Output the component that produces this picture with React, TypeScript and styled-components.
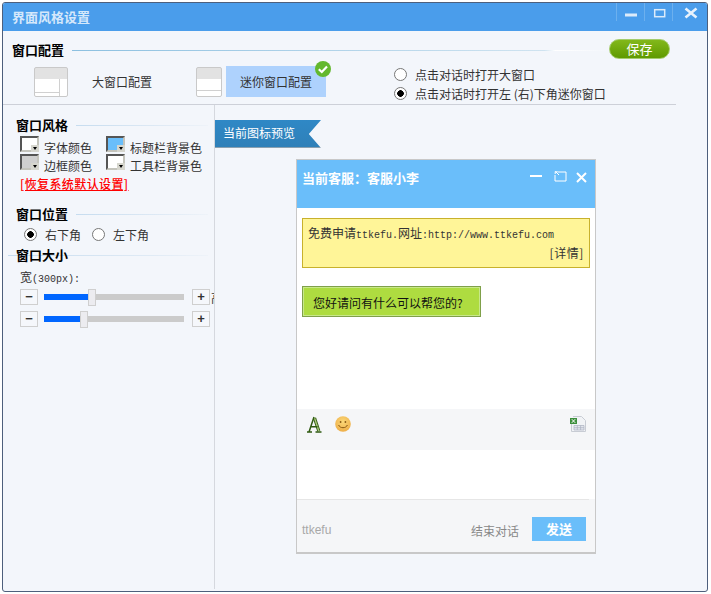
import * as React from 'react';
import styled, { createGlobalStyle } from 'styled-components';

const CJK = `"Noto Sans CJK SC", "Liberation Sans", sans-serif`;

const GlobalStyle = createGlobalStyle`
  html, body {
    margin: 0;
    padding: 0;
    background: #fff;
  }
  #root {
    width: 711px;
    height: 594px;
  }
  * {
    box-sizing: border-box;
  }
`;

export default function App() {
  return (
    <>
      <GlobalStyle />
      <Window>
        <TitleBar>
          <WindowTitle>界面风格设置</WindowTitle>
          <WindowControls>
            <ControlButton>
              <svg width="27" height="18" viewBox="0 0 27 18">
                <rect x="8" y="10.5" width="12" height="3" fill="#dcebfa" />
              </svg>
            </ControlButton>
            <ControlButton>
              <svg width="27" height="18" viewBox="0 0 27 18">
                <rect x="9.7" y="6.7" width="10" height="7" fill="none" stroke="#dcebfa" strokeWidth="1.5" />
              </svg>
            </ControlButton>
            <ControlButton $wide>
              <svg width="33" height="18" viewBox="0 0 33 18">
                <path d="M12.5 5.5 L23.5 14.5 M23.5 5.5 L12.5 14.5" stroke="#e8f2fc" strokeWidth="2.6" fill="none" />
              </svg>
            </ControlButton>
          </WindowControls>
        </TitleBar>

        <TopSection>
          <HeadingRow>
            <Heading>窗口配置</Heading>
            <FadeLine />
            <SaveButton>保存</SaveButton>
          </HeadingRow>
          <ConfigRow>
            <LayoutThumb $variant="large" />
            <ConfigLabel>大窗口配置</ConfigLabel>
            <LayoutThumb $variant="mini" />
            <SelectedConfig>
              迷你窗口配置
              <CheckBadge>
                <svg width="16" height="16" viewBox="0 0 16 16">
                  <circle cx="8" cy="8" r="8" fill="#63b82e" />
                  <path d="M3.8 8.2 L6.8 11 L12 5.6" fill="none" stroke="#fff" strokeWidth="2.2" />
                </svg>
              </CheckBadge>
            </SelectedConfig>
            <OpenModes>
              <RadioRow>
                <Radio />
                <span>点击对话时打开大窗口</span>
              </RadioRow>
              <RadioRow>
                <Radio $checked />
                <span>点击对话时打开左 (右)下角迷你窗口</span>
              </RadioRow>
            </OpenModes>
          </ConfigRow>
        </TopSection>

        <Body>
          <SidePanel>
            <SideHeading>
              <Heading>窗口风格</Heading>
              <SideLine />
            </SideHeading>
            <ColorGrid>
              <ColorOption>
                <Swatch $color="#fff" />
                <ColorName>字体颜色</ColorName>
              </ColorOption>
              <ColorOption>
                <Swatch $color="#6abefa" />
                <ColorName>标题栏背景色</ColorName>
              </ColorOption>
              <ColorOption>
                <Swatch $color="#cfcfcf" />
                <ColorName>边框颜色</ColorName>
              </ColorOption>
              <ColorOption>
                <Swatch $color="#fff" />
                <ColorName>工具栏背景色</ColorName>
              </ColorOption>
            </ColorGrid>
            <ResetLink>[恢复系统默认设置]</ResetLink>

            <PositionHeading>
              <Heading>窗口位置</Heading>
              <SideLine />
            </PositionHeading>
            <PositionRow>
              <Radio $checked />
              <span>右下角</span>
              <Radio />
              <span>左下角</span>
            </PositionRow>

            <SizeHeading>
              <Heading>窗口大小</Heading>
            </SizeHeading>
            <SizeLabel>
              宽<Mono>(300px):</Mono>
            </SizeLabel>
            <SliderRow>
              <StepButton>−</StepButton>
              <Track>
                <TrackFill style={{ width: 44 }} />
                <Thumb />
              </Track>
              <StepButton>+</StepButton>
              <ClippedLabel>高</ClippedLabel>
            </SliderRow>
            <SliderRow>
              <StepButton>−</StepButton>
              <Track>
                <TrackFill style={{ width: 36 }} />
                <Thumb />
              </Track>
              <StepButton>+</StepButton>
            </SliderRow>
          </SidePanel>

          <PreviewPanel>
            <Ribbon>当前图标预览</Ribbon>
            <ChatWindow>
              <ChatHeader>
                <ChatTitle>当前客服：客服小李</ChatTitle>
                <ChatControls>
                  <MinimizeIcon width="12" height="2" viewBox="0 0 12 2">
                    <rect width="12" height="2" fill="#fff" />
                  </MinimizeIcon>
                  <RestoreIcon width="13" height="11" viewBox="0 0 13 11">
                    <path d="M4 1 H12 V10 H1 V4 M1.5 0.5 L5 4 M1.2 0.5 V3 M1.2 0.8 H3.8" fill="none" stroke="#fff" strokeWidth="1" />
                  </RestoreIcon>
                  <svg width="11" height="11" viewBox="0 0 11 11">
                    <path d="M1 1 L10 10 M10 1 L1 10" fill="none" stroke="#fff" strokeWidth="2" />
                  </svg>
                </ChatControls>
              </ChatHeader>
              <Messages>
                <Notice>
                  <NoticeText>
                    免费申请<Mono>ttkefu.</Mono>网址<Mono>:http://www.ttkefu.com</Mono>
                  </NoticeText>
                  <NoticeMore>[详情]</NoticeMore>
                </Notice>
                <Bubble>您好请问有什么可以帮您的?</Bubble>
              </Messages>
              <ChatToolbar>
                <svg width="16" height="17" viewBox="0 0 16 17">
                  <path d="M8.5 2 L12.8 15" fill="none" stroke="#2f5a10" strokeWidth="3.2" />
                  <path d="M8.5 2 L12.8 15" fill="none" stroke="#a8c878" strokeWidth="1.4" />
                  <path d="M1 16 H6 M9.5 16 H15.5 M3 16 L8 1 M5 10.8 H11.5" fill="none" stroke="#2f5a10" strokeWidth="1.5" />
                </svg>
                <svg width="16" height="16" viewBox="0 0 16 16">
                  <defs>
                    <radialGradient id="smile" cx="50%" cy="35%" r="65%">
                      <stop offset="0%" stopColor="#fbd878" />
                      <stop offset="100%" stopColor="#eeae48" />
                    </radialGradient>
                  </defs>
                  <circle cx="8" cy="8" r="7.8" fill="url(#smile)" />
                  <circle cx="5.6" cy="6" r="0.9" fill="#8a5a14" />
                  <circle cx="10.4" cy="6" r="0.9" fill="#8a5a14" />
                  <path d="M3.6 9 C5 12.6 11 12.6 12.4 9" fill="none" stroke="#8a5a14" strokeWidth="1" />
                </svg>
                <ExcelIcon width="16" height="16" viewBox="0 0 16 16">
                  <path d="M3 0.5 H11.5 L15.5 4.5 V15.5 H1.5 V7" fill="#f1f3f6" stroke="#c8ccd4" />
                  <path d="M4 9.5 H14 V14 H4 Z M7.3 9.5 V14 M10.6 9.5 V14 M4 11.7 H14" fill="#e4e7ee" stroke="#aab0c0" strokeWidth="0.7" />
                  <rect x="0" y="2" width="7" height="6" fill="#3d8f3d" />
                  <path d="M1.8 3.2 L5.2 6.8 M5.2 3.2 L1.8 6.8" stroke="#fff" strokeWidth="1" />
                </ExcelIcon>
              </ChatToolbar>
              <ChatInput />
              <ChatFooter>
                <Brand>ttkefu</Brand>
                <EndLink>结束对话</EndLink>
                <SendButton>发送</SendButton>
              </ChatFooter>
            </ChatWindow>
          </PreviewPanel>
        </Body>
      </Window>
    </>
  );
}

const Window = styled.div`
  width: 706px;
  height: 590px;
  margin: 2px 0 0 2px;
  border: 1px solid #4d5f7c;
  border-radius: 3px;
  background: #f3f6fb;
  display: flex;
  flex-direction: column;
  overflow: hidden;
  font-family: ${CJK};
  font-size: 12px;
  color: #333;
`;

const TitleBar = styled.div`
  height: 28px;
  flex: none;
  background: #4a9deb;
  display: flex;
  justify-content: space-between;
  padding-left: 9px;
`;

const WindowTitle = styled.div`
  font-size: 13px;
  font-weight: 700;
  line-height: 27px;
  color: #d5e8fb;
`;

const WindowControls = styled.div`
  display: flex;
  align-items: flex-start;
  height: 18px;
  margin-right: 1px;
`;

const ControlButton = styled.div<{ $wide?: boolean }>`
  width: ${({ $wide }) => ($wide ? 34 : 28)}px;
  height: 18px;
  line-height: 0;
  border-left: 1px solid #6cb0ee;
`;

const TopSection = styled.div`
  height: 74px;
  flex: none;
  margin-right: 31px;
  border-bottom: 1px solid #cdd0d8;
  padding: 9px 0 0 9px;
  display: flex;
  flex-direction: column;
`;

const HeadingRow = styled.div`
  display: flex;
  align-items: center;
  height: 20px;
`;

const Heading = styled.div`
  font-size: 13px;
  font-weight: 700;
  line-height: 16px;
  color: #000;
  flex: none;
`;

const FadeLine = styled.div`
  flex: 1;
  height: 1px;
  margin: 1px 0 0 8px;
  background: linear-gradient(to right, #8cc0e0, #cfe3f0 88%, #fff 90%, #f3f6fb);
`;

const SaveButton = styled.div`
  width: 61px;
  height: 20px;
  margin: -2px 6px 0 0;
  flex: none;
  border-radius: 10px;
  background: linear-gradient(#82b81a, #5f9a00);
  border: 1px solid #a4cc6c;
  color: #fff;
  font-size: 13px;
  line-height: 17px;
  text-align: center;
`;

const ConfigRow = styled.div`
  display: flex;
  align-items: flex-start;
  margin-top: 6px;
  padding-left: 22px;
`;

const LayoutThumb = styled.div<{ $variant: 'large' | 'mini' }>`
  width: ${({ $variant }) => ($variant === 'large' ? 34 : 26)}px;
  height: 30px;
  margin-top: 1px;
  flex: none;
  border: 1px solid #c9c9c9;
  border-radius: 2px;
  background:
    ${({ $variant }) =>
      $variant === 'large'
        ? `linear-gradient(#d0d0d0, #d0d0d0) 24px 11px / 1px 100% no-repeat,
           linear-gradient(#d0d0d0, #d0d0d0) 0 24px / 24px 1px no-repeat,`
        : `linear-gradient(#d0d0d0, #d0d0d0) 0 22px / 100% 1px no-repeat,`}
    linear-gradient(#e2e2e2, #e2e2e2) 0 0 / 100% 11px no-repeat,
    #fff;
`;

const ConfigLabel = styled.div`
  width: 128px;
  padding-left: 24px;
  line-height: 32px;
  flex: none;
`;

const SelectedConfig = styled.div`
  position: relative;
  width: 100px;
  height: 31px;
  margin-left: 4px;
  flex: none;
  background: #aed2fd;
  text-align: center;
  line-height: 31px;
`;

const CheckBadge = styled.div`
  position: absolute;
  top: -5px;
  right: -5px;
  width: 16px;
  height: 16px;
  line-height: 0;
`;

const OpenModes = styled.div`
  margin: -1px 0 0 68px;
  display: flex;
  flex-direction: column;
`;

const RadioRow = styled.div`
  display: flex;
  align-items: center;
  gap: 8px;
  height: 19px;
  white-space: nowrap;
`;

const Radio = styled.span<{ $checked?: boolean }>`
  width: 13px;
  height: 13px;
  flex: none;
  display: inline-block;
  border-radius: 50%;
  border: 1px solid #777;
  background: ${({ $checked }) =>
    $checked ? 'radial-gradient(circle, #000 0 3px, #fff 3.6px)' : '#fff'};
`;

const Body = styled.div`
  flex: 1;
  min-height: 0;
  display: flex;
`;

const SidePanel = styled.div`
  width: 212px;
  height: 484px;
  flex: none;
  overflow: hidden;
  border-right: 1px solid #d5d8de;
  padding: 12px 0 0 13px;
`;

const SideHeading = styled.div`
  display: flex;
  align-items: center;
  height: 16px;
`;

const SideLine = styled.div`
  width: 132px;
  height: 1px;
  margin-left: 8px;
  background: linear-gradient(to right, #c6dcef, #dfeaf5 65%, #eef3f9);
`;

const ColorGrid = styled.div`
  display: grid;
  grid-template-columns: 86px auto;
  grid-auto-rows: 18px;
  margin: 3px 0 0 4px;
`;

const ColorOption = styled.div`
  display: flex;
  align-items: flex-start;
  gap: 5px;
  white-space: nowrap;
`;

const ColorName = styled.span`
  margin-top: 3px;
  line-height: 18px;
`;

const Swatch = styled.span<{ $color: string }>`
  position: relative;
  width: 19px;
  height: 16px;
  flex: none;
  background: ${({ $color }) => $color};
  border: 2px solid;
  border-color: #555 #c4c4bc #c4c4bc #555;
  &::before {
    content: '';
    position: absolute;
    right: -2px;
    bottom: -2px;
    width: 8px;
    height: 7px;
    background: #d6d6ce;
  }
  &::after {
    content: '';
    position: absolute;
    right: 0;
    bottom: 0;
    border: 2.5px solid transparent;
    border-top: 3px solid #000;
    border-bottom: 0;
  }
`;

const ResetLink = styled.div`
  margin: 4px 0 0 4px;
  color: #f00;
  font-size: 12px;
  line-height: 16px;
  text-decoration: underline;
  letter-spacing: 0.4px;
  font-weight: 500;
`;

const PositionHeading = styled(SideHeading)`
  margin-top: 14px;
`;

const PositionRow = styled.div`
  display: flex;
  align-items: center;
  height: 18px;
  margin: 3px 0 0 8px;
  span:nth-child(2) {
    margin: 0 11px 0 8px;
  }
  span:nth-child(4) {
    margin-left: 8px;
  }
`;

const SizeHeading = styled.div`
  height: 16px;
  margin: 4px 0 0 -8px;
  padding-left: 8px;
  background: linear-gradient(to right, #c6dcef, #dfeaf5 70%, #eef3f9) 0 8px / 200px 1px no-repeat;
`;

const SizeLabel = styled.div`
  margin: 6px 0 0 4px;
  line-height: 16px;
  white-space: nowrap;
`;

const SliderRow = styled.div`
  display: flex;
  align-items: center;
  height: 16px;
  margin: 1px 0 6px 4px;
  width: 210px;
`;

const StepButton = styled.div`
  width: 18px;
  height: 16px;
  flex: none;
  border: 1px solid #cfcfcf;
  background: #f5f7fb;
  color: #333;
  font: 700 13px/13px "Liberation Sans", sans-serif;
  text-align: center;
`;

const Track = styled.div`
  width: 140px;
  height: 6px;
  margin: 0 8px 0 6px;
  flex: none;
  display: flex;
  align-items: center;
  background: #cbcbcb;
`;

const TrackFill = styled.div`
  height: 6px;
  flex: none;
  background: #0066ff;
`;

const Thumb = styled.div`
  width: 8px;
  height: 17px;
  flex: none;
  background: #ececf0;
  border: 1px solid #cfcfcf;
`;

const ClippedLabel = styled.span`
  margin-left: 1px;
  flex: none;
`;

const PreviewPanel = styled.div`
  flex: 1;
  min-width: 0;
  padding-top: 15px;
`;

const Ribbon = styled.div`
  width: 106px;
  height: 28px;
  background: linear-gradient(#2f88c6, #2f80b8);
  border-bottom: 1px solid #8aa0b0;
  clip-path: polygon(0 0, 100% 0, 88.5% 50%, 100% 100%, 0 100%);
  color: #fff;
  line-height: 26px;
  padding-left: 8px;
`;

const ChatWindow = styled.div`
  width: 300px;
  height: 395px;
  margin: 11px 0 0 81px;
  background: #fff;
  border: 1px solid #c8c8c8;
  border-bottom-width: 2px;
  display: flex;
  flex-direction: column;
`;

const ChatHeader = styled.div`
  height: 48px;
  flex: none;
  background: #6abefa;
  display: flex;
  justify-content: space-between;
  padding: 9px 8px 0 5px;
`;

const ChatTitle = styled.div`
  font-size: 13px;
  font-weight: 700;
  line-height: 17px;
  color: #fff;
`;

const ChatControls = styled.div`
  display: flex;
  align-items: flex-start;
  padding-top: 3px;
`;

const MinimizeIcon = styled.svg`
  margin-top: 3px;
`;

const RestoreIcon = styled.svg`
  margin: -1px 9px 0 12px;
`;

const Messages = styled.div`
  flex: 1;
  padding: 10px 5px 0;
`;

const Notice = styled.div`
  height: 50px;
  background: #fff598;
  border: 1px solid #c8b12c;
  padding: 4px 5px;
  line-height: 20px;
`;

const NoticeText = styled.div`
  white-space: nowrap;
`;

const Mono = styled.span`
  font-family: "Liberation Mono", monospace;
  font-size: 10px;
`;

const NoticeMore = styled.div`
  text-align: right;
  margin-top: -3px;
  letter-spacing: 0.6px;
`;

const Bubble = styled.div`
  width: 179px;
  height: 31px;
  margin-top: 18px;
  background: #aedc40;
  border: 1px solid #7fa04a;
  box-shadow: inset -1px -1px 0 #c8e88a, inset 1px 1px 0 #c8e88a;
  color: #111;
  line-height: 31px;
  padding-left: 10px;
`;

const ChatToolbar = styled.div`
  height: 41px;
  flex: none;
  background: #f5f6f8;
  display: flex;
  align-items: flex-start;
  gap: 13px;
  padding: 7px 9px 0;
`;

const ExcelIcon = styled.svg`
  margin-left: auto;
`;

const ChatInput = styled.div`
  height: 49px;
  flex: none;
  background: #fff;
`;

const ChatFooter = styled.div`
  height: 53px;
  flex: none;
  background: linear-gradient(#e6e6e6, #e6e6e6) 0 0 / 292px 1px no-repeat, #f5f6f8;
  display: flex;
  align-items: flex-start;
  padding: 18px 9px 0 5px;
`;

const Brand = styled.div`
  font: 12px/26px "Liberation Sans", sans-serif;
  color: #a8a8a8;
  margin-right: auto;
`;

const EndLink = styled.div`
  color: #888;
  line-height: 28px;
  margin-right: 13px;
`;

const SendButton = styled.div`
  width: 54px;
  height: 24px;
  background: #6abefa;
  color: #fff;
  font-weight: 700;
  font-size: 13px;
  line-height: 24px;
  text-align: center;
`;
